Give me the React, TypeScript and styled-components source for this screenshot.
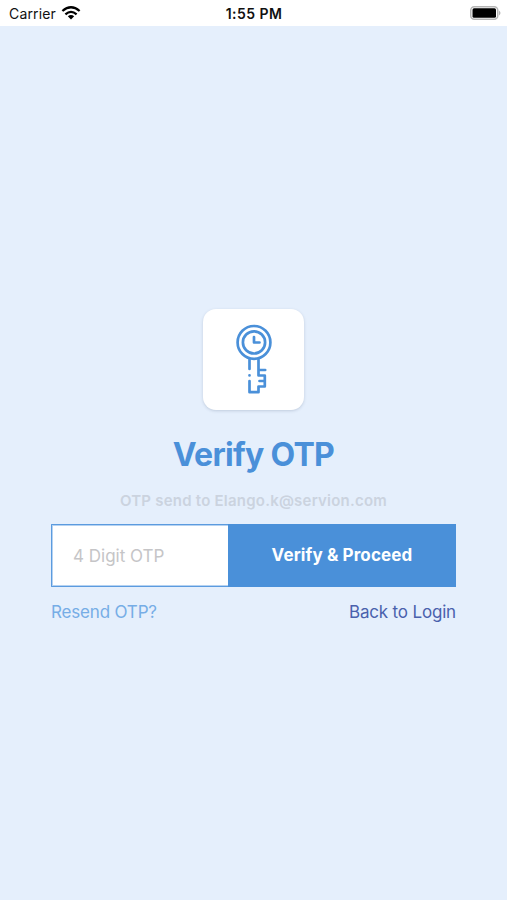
import React from "react";
import styled, { createGlobalStyle } from "styled-components";

const GlobalStyle = createGlobalStyle`
  * { box-sizing: border-box; }
  body { margin: 0; background: #e5effc; font-family: Inter, sans-serif; }
`;

const Screen = styled.main`
  height: 900px;
  display: flex;
  flex-direction: column;
  align-items: center;
  background: #e5effc;
`;

const StatusBar = styled.header`
  width: 100%;
  height: 26px;
  flex: none;
  display: grid;
  grid-template-columns: 1fr auto 1fr;
  align-items: center;
  padding: 1px 6px 0 9px;
  background: #fff;
  color: #111;
  font-size: 14px;
`;

const Carrier = styled.div`
  display: flex;
  align-items: center;
  gap: 5px;
  letter-spacing: 0.15px;
`;

const WifiIcon = styled.svg`
  margin-bottom: 2px;
`;

const Time = styled.time`
  font-weight: 600;
  letter-spacing: 0.45px;
  margin-right: 2px;
`;

const Battery = styled.svg`
  justify-self: end;
  margin-bottom: 1px;
`;

const IconCard = styled.div`
  width: 101px;
  height: 101px;
  margin-top: 283px;
  display: flex;
  justify-content: center;
  background: #fff;
  border-radius: 13px;
  box-shadow: 0 1px 3px rgba(80, 100, 130, 0.25);
`;

const Title = styled.h1`
  margin: 25px 0 0;
  font-size: 32px;
  line-height: 40px;
  font-weight: 700;
  letter-spacing: -0.7px;
  color: #4a90d9;
`;

const Subtitle = styled.p`
  margin: 16px 0 0;
  font-size: 15px;
  line-height: 20px;
  font-weight: 600;
  letter-spacing: 0.22px;
  color: #cbd3df;
`;

const Form = styled.form`
  width: 405px;
  height: 63px;
  margin-top: 13px;
  display: flex;
`;

const OtpInput = styled.input`
  width: 177px;
  border: 1px solid #5b9bdf;
  border-right: 0;
  box-shadow: inset 1px 1px 0 #b5d2f1, inset 0 -1px 0 #b5d2f1;
  border-radius: 1px 0 0 1px;
  padding: 0 21px;
  font: 400 17px Inter, sans-serif;
  outline: none;
  &::placeholder { color: #c5c5c7; opacity: 1; }
`;

const Submit = styled.button`
  flex: 1;
  padding: 0 0 2px;
  border: 0;
  background: #4a90d9;
  color: #fff;
  font: 700 17px Inter, sans-serif;
  letter-spacing: 0.12px;
`;

const Links = styled.nav`
  width: 405px;
  margin-top: 14px;
  display: flex;
  justify-content: space-between;
`;

const Link = styled.a<{ $color: string }>`
  color: ${(p) => p.$color};
  font-size: 17px;
  line-height: 22px;
  letter-spacing: -0.17px;
`;

export default function App() {
  return (
    <Screen>
      <GlobalStyle />
      <StatusBar>
        <Carrier>
          <span>Carrier</span>
          <WifiIcon width="20" height="14" viewBox="0 0 20 14" fill="none" stroke="#000" strokeWidth="2.3">
            <path d="M1.4 5Q10-2.4 18.6 5M4.4 8.4Q10 3.4 15.6 8.4" />
            <path d="M10 13.4L6.8 10.2Q10 7.7 13.2 10.2Z" fill="#000" stroke="none" />
          </WifiIcon>
        </Carrier>
        <Time>1:55 PM</Time>
        <Battery width="31" height="14" viewBox="0 0 31 14">
          <rect x="0.75" y="0.75" width="27" height="12.5" rx="3.5" fill="none" stroke="#b5b5b5" strokeWidth="1.5" />
          <rect x="2.5" y="2.3" width="23.5" height="9.4" rx="1.5" />
          <path d="M29 4.5Q32 7 29 9.5Z" fill="#b5b5b5" />
        </Battery>
      </StatusBar>
      <IconCard>
        <svg width="101" height="101" viewBox="203 309 101 101" fill="none" stroke="#4a90d9" strokeWidth="2.7" strokeLinecap="round" strokeLinejoin="round">
          <circle cx="254" cy="342.4" r="16.4" />
          <circle cx="254" cy="342.4" r="11.1" />
          <path d="M254 337V342.5H259.5" />
          <path d="M249.5 359.5V369M249.5 375.3V375.4M249.5 381V392.2H258.5V386.5H264.8V375.5H258.5V359.5M258.5 370H265.2M259.5 381H264.8" />
        </svg>
      </IconCard>
      <Title>Verify OTP</Title>
      <Subtitle>OTP send to Elango.k@servion.com</Subtitle>
      <Form onSubmit={(e) => e.preventDefault()}>
        <OtpInput placeholder="4 Digit OTP" />
        <Submit>Verify &amp; Proceed</Submit>
      </Form>
      <Links>
        <Link $color="#76ade6">Resend OTP?</Link>
        <Link $color="#4a61ad">Back to Login</Link>
      </Links>
    </Screen>
  );
}
